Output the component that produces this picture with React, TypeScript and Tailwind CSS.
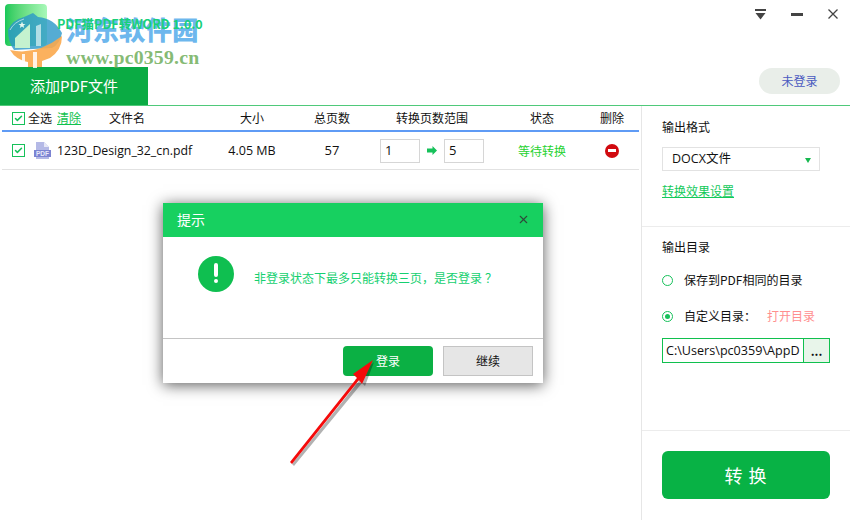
import { Check, X } from "lucide-react";

const sans = "font-['Open_Sans','Noto_Sans_CJK_SC',sans-serif]";

function CheckBox() {
  return (
    <span className="flex h-[13px] w-[13px] items-center justify-center border border-[#16c15a] bg-white">
      <Check size={9} strokeWidth={4} className="text-[#16c15a]" />
    </span>
  );
}

function Watermark() {
  return (
    <div className="pointer-events-none absolute left-0 top-0 h-[68px] w-[240px]">
      {/* app logo */}
      <div className="absolute left-[5px] top-[4px] h-[42px] w-[42px] rounded-[4px] bg-gradient-to-r from-[#14c858] to-[#a8f8b8]" />
      {/* site mark */}
      <svg className="absolute left-0 top-0" width="70" height="68" viewBox="0 0 70 68">
        <path d="M8 30 Q12 20 24 17 L33 13 L38 17 Q54 18 62 33 Q60 44 52 48 L14 50 Q8 42 8 30 Z" fill="#2a97c8" opacity="0.8" />
        <path d="M15 38 L30 24 L30 48 L15 48 Z" fill="#c4f2cf" />
        <path d="M36 26 L41 24 L41 46 L36 46 Z" fill="#d8f0f2" opacity="0.75" />
        <path d="M10 30 Q14 22 24 19" fill="none" stroke="#d8f0f2" strokeWidth="1" opacity="0.7" />
        <path d="M22 21.5 L23 24 L25.5 24 L23.5 25.5 L24.2 28 L22 26.5 L19.8 28 L20.5 25.5 L18.5 24 L21 24 Z" fill="#e6f8ee" />
        <path d="M10 50 Q36 56 62 36 Q62 50 50 58 L42 61 L42 67 L28 67 L28 62 Q16 60 10 50 Z" fill="#fba84c" opacity="0.9" />
        <path d="M33 52 L37 52 L37 68 L33 68 Z M22 54 L25 54 L25 64 L22 62 Z" fill="#fff" opacity="0.85" />
      </svg>
      <span className="absolute left-[66px] top-[11px] font-['Noto_Sans_CJK_SC',serif] text-[26.5px] font-black leading-[36px] whitespace-nowrap text-[#3d9fe8]/75">
        河东软件园
      </span>
      <span className="absolute left-[66px] top-[47px] font-['Liberation_Serif',serif] text-[19.8px] font-bold leading-[20px] tracking-[0.2px] whitespace-nowrap text-[#65a84f]/80">
        www.pc0359.cn
      </span>
      <span className="absolute left-[57px] top-[16px] text-[12.5px] font-semibold leading-[16px] whitespace-nowrap text-[#17d07a]">
        PDF猫PDF转WORD 1.0.0
      </span>
    </div>
  );
}

function Header() {
  return (
    <div className="flex h-[106px] flex-col justify-end border-b border-[#4fc97a]">
      <div className="flex items-end justify-between">
        <div className="flex h-[38px] w-[148px] items-center justify-center bg-[#0aab44] text-[15px] text-white">
          添加PDF文件
        </div>
        <div className="mb-[11px] mr-[10px] flex h-[26px] w-[81px] items-center justify-center rounded-full bg-[#e9eee9] text-[12px] text-[#4a5ac0]">
          未登录
        </div>
      </div>
    </div>
  );
}

function PdfIcon() {
  return (
    <svg className="ml-[9px]" width="17" height="17" viewBox="0 0 17 17">
      <path d="M2 0 H10 L15 5 V17 H2 Z" fill="#b4b9e6" />
      <path d="M10 0 L15 5 H10 Z" fill="#e6e7f6" />
      <rect x="0" y="8" width="17" height="7" fill="#7c84d2" />
      <text x="8.5" y="14" textAnchor="middle" fontSize="6.5" fontWeight="700" fill="#e8eafa" fontFamily="Liberation Sans, sans-serif">
        PDF
      </text>
    </svg>
  );
}

function FileTable() {
  return (
    <div className="px-[2px] text-[12px] text-[#111]">
      <div className="grid h-[26px] grid-cols-[210px_80px_80px_120px_100px_40px_1fr] items-center border-b-2 border-[#5f9bf5] text-center">
        <div className="flex items-center text-left">
          <span className="ml-[10px]">
            <CheckBox />
          </span>
          <span className="ml-[3px]">全选</span>
          <span className="ml-[5px] text-[#10c24d] underline">清除</span>
          <span className="ml-[28px]">文件名</span>
        </div>
        <div>大小</div>
        <div>总页数</div>
        <div>转换页数范围</div>
        <div>状态</div>
        <div>删除</div>
      </div>
      <div className="grid h-[38px] grid-cols-[210px_80px_80px_120px_100px_40px_1fr] items-center border-b border-[#e2e2e2] text-center">
        <div className="flex items-center text-left">
          <span className="ml-[10px]">
            <CheckBox />
          </span>
          <PdfIcon />
          <span className={`ml-[6px] whitespace-nowrap pt-[1px] text-[12.3px] ${sans}`}>123D_Design_32_cn.pdf</span>
        </div>
        <div className={`pt-[1px] text-[12.5px] ${sans}`}>4.05 MB</div>
        <div className={`pt-[1px] text-[13px] ${sans}`}>57</div>
        <div className="flex items-center justify-center">
          <div className={`flex h-[24px] w-[40px] items-center border border-[#d6d6d6] pl-[4px] text-[13px] ${sans}`}>1</div>
          <svg className="mx-[7px]" width="10" height="9" viewBox="0 0 10 9">
            <path d="M0 2.5 H5.5 V0 L10 4.5 L5.5 9 V6.5 H0 Z" fill="#16c15a" />
          </svg>
          <div className={`flex h-[24px] w-[40px] items-center border border-[#d6d6d6] pl-[4px] text-[13px] ${sans}`}>5</div>
        </div>
        <div className="text-[#1fd22f]">等待转换</div>
        <div className="flex justify-center">
          <span className="flex h-[14px] w-[14px] items-center justify-center rounded-full bg-[#d10a10]">
            <span className="h-[3px] w-[8px] bg-white" />
          </span>
        </div>
      </div>
    </div>
  );
}

function Sidebar() {
  return (
    <div className="flex w-[209px] flex-col border-l border-[#e6e6e6] text-[12px] text-[#111]">
      <div className="h-[121px] border-b border-[#ececec] pl-[20px] pt-[13px]">
        <div className="leading-[16px]">输出格式</div>
        <div className="mt-[12px] flex h-[24px] w-[158px] items-center justify-between border border-[#e2e2e2] pl-[9px] pr-[8px]">
          <span className={`text-[12.5px] ${sans}`}>DOCX文件</span>
          <span className="mt-[3px] h-0 w-0 border-x-[3px] border-t-[5px] border-x-transparent border-t-[#16b84f]" />
        </div>
        <div className="mt-[12px] leading-[16px] text-[#12c95a] underline">转换效果设置</div>
      </div>
      <div className="flex-1 pl-[20px] pt-[12px]">
        <div className="leading-[16px]">输出目录</div>
        <label className="mt-[17px] flex items-center">
          <span className="h-[11px] w-[11px] rounded-full border border-[#16c15a]" />
          <span className="ml-[11px] leading-[16px]">保存到PDF相同的目录</span>
        </label>
        <label className="mt-[20px] flex items-center">
          <span className="flex h-[11px] w-[11px] items-center justify-center rounded-full border border-[#16c15a]">
            <span className="h-[5px] w-[5px] rounded-full bg-[#16c15a]" />
          </span>
          <span className="ml-[11px] leading-[16px]">自定义目录：</span>
          <span className="ml-[11px] leading-[16px] text-[#ff8f8f]">打开目录</span>
        </label>
        <div className="mt-[14px] flex h-[25px] w-[168px] border border-[#10c04e]">
          <span className={`flex-1 overflow-hidden whitespace-nowrap pl-[3px] text-[12.6px] leading-[23px] ${sans}`}>
            C:\Users\pc0359\AppD
          </span>
          <span className="flex w-[26px] items-center justify-center border-l border-[#10c04e] bg-[#e8f5ea] font-bold leading-[23px]">
            ...
          </span>
        </div>
      </div>
      <div className="h-[90px] border-t border-[#ececec] pl-[20px] pt-[20px]">
        <button className="h-[48px] w-[168px] rounded-[6px] bg-[#08b245] pl-[5px] text-[18px] tracking-[6px] text-white">
          转换
        </button>
      </div>
    </div>
  );
}

function Dialog() {
  return (
    <div className="absolute left-[163px] top-[203px] flex h-[180px] w-[380px] flex-col bg-white text-[12px] shadow-[0_2px_14px_rgba(0,0,0,0.65)]">
      <div className="flex h-[34px] items-center justify-between bg-[#17d060] pb-[2px] pl-[14px] pr-[13px] text-[14px] text-white">
        <span>提示</span>
        <X size={13} strokeWidth={2} className="text-[#2f4a3a]" />
      </div>
      <div className="flex h-[102px] border-b border-[#c4c4c4] pl-[35px] pt-[19px]">
        <span className="relative h-[36px] w-[36px] rounded-full bg-[#0fbf50]">
          <span className="absolute left-[16px] top-[7px] h-[14px] w-[4px] rounded-full bg-white" />
          <span className="absolute left-[16px] top-[23px] h-[4px] w-[4px] rounded-full bg-white" />
        </span>
        <span className="ml-[20px] mt-[13px] leading-[18px] text-[#15d070]">
          非登录状态下最多只能转换三页，是否登录<span className="ml-[3px]">？</span>
        </span>
      </div>
      <div className="flex flex-1 items-start justify-end gap-[10px] pr-[10px] pt-[7px]">
        <button className="h-[30px] w-[90px] rounded-[4px] bg-[#0bb044] text-white">登录</button>
        <button className="h-[30px] w-[90px] border border-[#c4c4c4] bg-[#e6e6e6] text-[#111]">继续</button>
      </div>
    </div>
  );
}

export default function App() {
  return (
    <div className="relative h-[520px] w-[850px] overflow-hidden bg-white font-['Noto_Sans_CJK_SC','Open_Sans',sans-serif]">
      <Header />
      <div className="flex h-[414px]">
        <div className="flex-1">
          <FileTable />
        </div>
        <Sidebar />
      </div>

      <Watermark />

      {/* window buttons */}
      <div className="absolute right-[12px] top-[9px] flex items-start gap-[25px]">
        <svg width="11" height="11" viewBox="0 0 11 11">
          <rect x="0" y="0" width="11" height="2" fill="#444" />
          <path d="M0.5 4 H10.5 L5.5 10.5 Z" fill="#444" />
        </svg>
        <span className="mt-[4px] h-[3px] w-[12px] bg-[#444]" />
        <svg width="10" height="10" viewBox="0 0 10 10">
          <path d="M0.5 0.5 L9.5 9.5 M9.5 0.5 L0.5 9.5" stroke="#444" strokeWidth="1.3" fill="none" />
        </svg>
      </div>

      <Dialog />

      {/* red annotation arrow */}
      <svg className="pointer-events-none absolute left-[280px] top-[350px]" width="110" height="120" viewBox="0 0 110 120">
        <path d="M12 114 L79 31 L75 30 L94 12 L85 36 L82 33 L14 116 Z" fill="#000" opacity="0.3" />
        <path d="M10 112 L77 28 L73 24 L93 10 L82 34 L79 30 L12 114 Z" fill="#f50a0a" />
      </svg>
    </div>
  );
}
